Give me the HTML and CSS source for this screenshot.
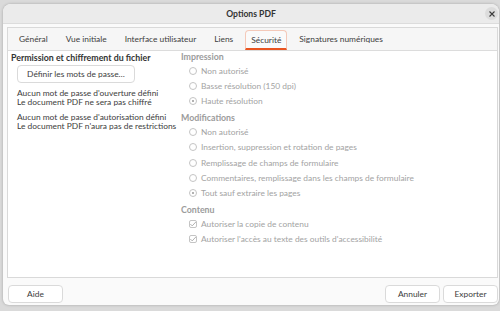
FILE: index.html
```html
<!DOCTYPE html>
<html lang="fr">
<head>
    <meta charset="UTF-8">
    <title>Options PDF</title>
    <link rel="stylesheet" href="styles.css">
</head>
<body>
    <div class="dialog">
        <div class="titlebar">
            <span class="title">Options PDF</span>
            <span class="close">
                <svg width="6" height="6" viewBox="0 0 6 6"><path d="M0.5 0.5 L5.5 5.5 M5.5 0.5 L0.5 5.5" stroke="#3c3c3c" stroke-width="1.1"/></svg>
            </span>
        </div>

        <div class="notebook">
            <div class="tabs">
                <div class="tab">Général</div>
                <div class="tab">Vue initiale</div>
                <div class="tab">Interface utilisateur</div>
                <div class="tab">Liens</div>
                <div class="tab active">Sécurité</div>
                <div class="tab">Signatures numériques</div>
            </div>

            <div class="page">
                <div class="col-left">
                    <div class="heading">Permission et chiffrement du fichier</div>
                    <button class="btn btn-pass">Définir les mots de passe…</button>
                    <p class="info">Aucun mot de passe d'ouverture défini<br>Le document PDF ne sera pas chiffré</p>
                    <p class="info">Aucun mot de passe d'autorisation défini<br>Le document PDF n'aura pas de restrictions</p>
                </div>

                <div class="col-right">
                    <div class="heading muted">Impression</div>
                    <div class="option"><span class="radio"></span>Non autorisé</div>
                    <div class="option"><span class="radio"></span>Basse résolution (150 dpi)</div>
                    <div class="option"><span class="radio on"></span>Haute résolution</div>

                    <div class="heading muted">Modifications</div>
                    <div class="option"><span class="radio"></span>Non autorisé</div>
                    <div class="option"><span class="radio"></span>Insertion, suppression et rotation de pages</div>
                    <div class="option"><span class="radio"></span>Remplissage de champs de formulaire</div>
                    <div class="option"><span class="radio"></span>Commentaires, remplissage dans les champs de formulaire</div>
                    <div class="option"><span class="radio on"></span>Tout sauf extraire les pages</div>

                    <div class="heading muted">Contenu</div>
                    <div class="option">
                        <span class="check"><svg width="8" height="8" viewBox="0 0 8 8"><path d="M1.3 4 L3.2 5.9 L6.8 2" fill="none" stroke="#a9a9a9" stroke-width="0.9"/></svg></span>Autoriser la copie de contenu
                    </div>
                    <div class="option">
                        <span class="check"><svg width="8" height="8" viewBox="0 0 8 8"><path d="M1.3 4 L3.2 5.9 L6.8 2" fill="none" stroke="#a9a9a9" stroke-width="0.9"/></svg></span>Autoriser l'accès au texte des outils d'accessibilité
                    </div>
                </div>
            </div>
        </div>

        <div class="footer">
            <button class="btn">Aide</button>
            <div class="spacer"></div>
            <button class="btn">Annuler</button>
            <button class="btn">Exporter</button>
        </div>
    </div>
</body>
</html>
```

FILE: styles.css
```css
body {
    margin: 0;
    background-color: #dadada;
    font-family: Lato, "Open Sans", sans-serif;
    font-size: 8.4px;
    color: #3c3c3c;
    padding: 4px 1px 6px 3px;
    height: 311px;
    box-sizing: border-box;
}
.dialog {
    background-color: #fafafa;
    border-radius: 8px 8px 6px 6px;
    box-shadow: 0 0 3px rgba(0, 0, 0, 0.25);
    height: 301px;
    display: flex;
    flex-direction: column;
    overflow: hidden;
}
.titlebar {
    height: 19px;
    background-color: #ebebeb;
    border-bottom: 1px solid #dcdcdc;
    display: flex;
    align-items: center;
    justify-content: center;
    position: relative;
}
.title {
    font-weight: bold;
    font-size: 8.6px;
    color: #333;
}
.close {
    position: absolute;
    right: 1px;
    top: 3px;
    width: 13px;
    height: 13px;
    border-radius: 50%;
    background-color: #dcdcdc;
    display: flex;
    align-items: center;
    justify-content: center;
}
.notebook {
    margin: 3px 1px 0 4px;
    border: 1px solid #d9d9d9;
    flex: 1;
    display: flex;
    flex-direction: column;
}
.tabs {
    display: flex;
    background-color: #f6f6f6;
    border-bottom: 1px solid #dcdcdc;
    height: 22px;
    padding-left: 2px;
}
.tab {
    padding: 0 9px;
    display: flex;
    align-items: center;
    color: #404040;
}
.tab.active {
    margin: 2px 3px 0;
    padding: 0 5px;
    border: 1px solid #f4c9b9;
    border-bottom: 2px solid #e95420;
    border-radius: 4px 4px 0 0;
    background-color: #fafafa;
}
.page {
    flex: 1;
    background-color: #fff;
    display: flex;
    padding: 0 3px;
}
.col-left {
    width: 170px;
}
.col-right {
    flex: 1;
    padding-top: 0;
}
.heading {
    font-weight: bold;
    font-size: 8.8px;
    color: #333;
    height: 14px;
    line-height: 14px;
}
.heading.muted {
    color: #9c9c9c;
    height: 15px;
    line-height: 12px;
}
.btn {
    font-family: inherit;
    font-size: 8.4px;
    color: #3c3c3c;
    background-color: #fff;
    border: 1px solid #dadada;
    border-radius: 4px;
    height: 18px;
    padding: 0;
}
.btn-pass {
    margin: 0 0 0 6px;
    width: 118px;
}
.info {
    margin: 6px 0 0 6px;
    line-height: 9px;
}
.info + .info {
    margin-top: 6px;
}
.option {
    display: flex;
    align-items: center;
    height: 15.4px;
    padding-left: 8px;
    color: #a3a3a3;
    margin-top: -3px;
    margin-bottom: 3px;
}
.radio {
    width: 8px;
    height: 8px;
    border: 1px solid #c4c4c4;
    border-radius: 50%;
    margin-right: 4px;
    position: relative;
    box-sizing: border-box;
}
.radio.on::after {
    content: "";
    position: absolute;
    left: 2px;
    top: 2px;
    width: 2px;
    height: 2px;
    border-radius: 50%;
    background-color: #999;
}
.check {
    width: 8px;
    height: 8px;
    border: 1px solid #c4c4c4;
    border-radius: 2px;
    margin-right: 4px;
    display: flex;
    box-sizing: border-box;
}
.check svg {
    margin: -1px;
}
.footer {
    height: 27px;
    display: flex;
    align-items: flex-start;
    padding: 7px 1px 0 5px;
    box-sizing: border-box;
    gap: 3px;
}
.footer .btn {
    width: 55px;
}
.spacer {
    flex: 1;
}
```
